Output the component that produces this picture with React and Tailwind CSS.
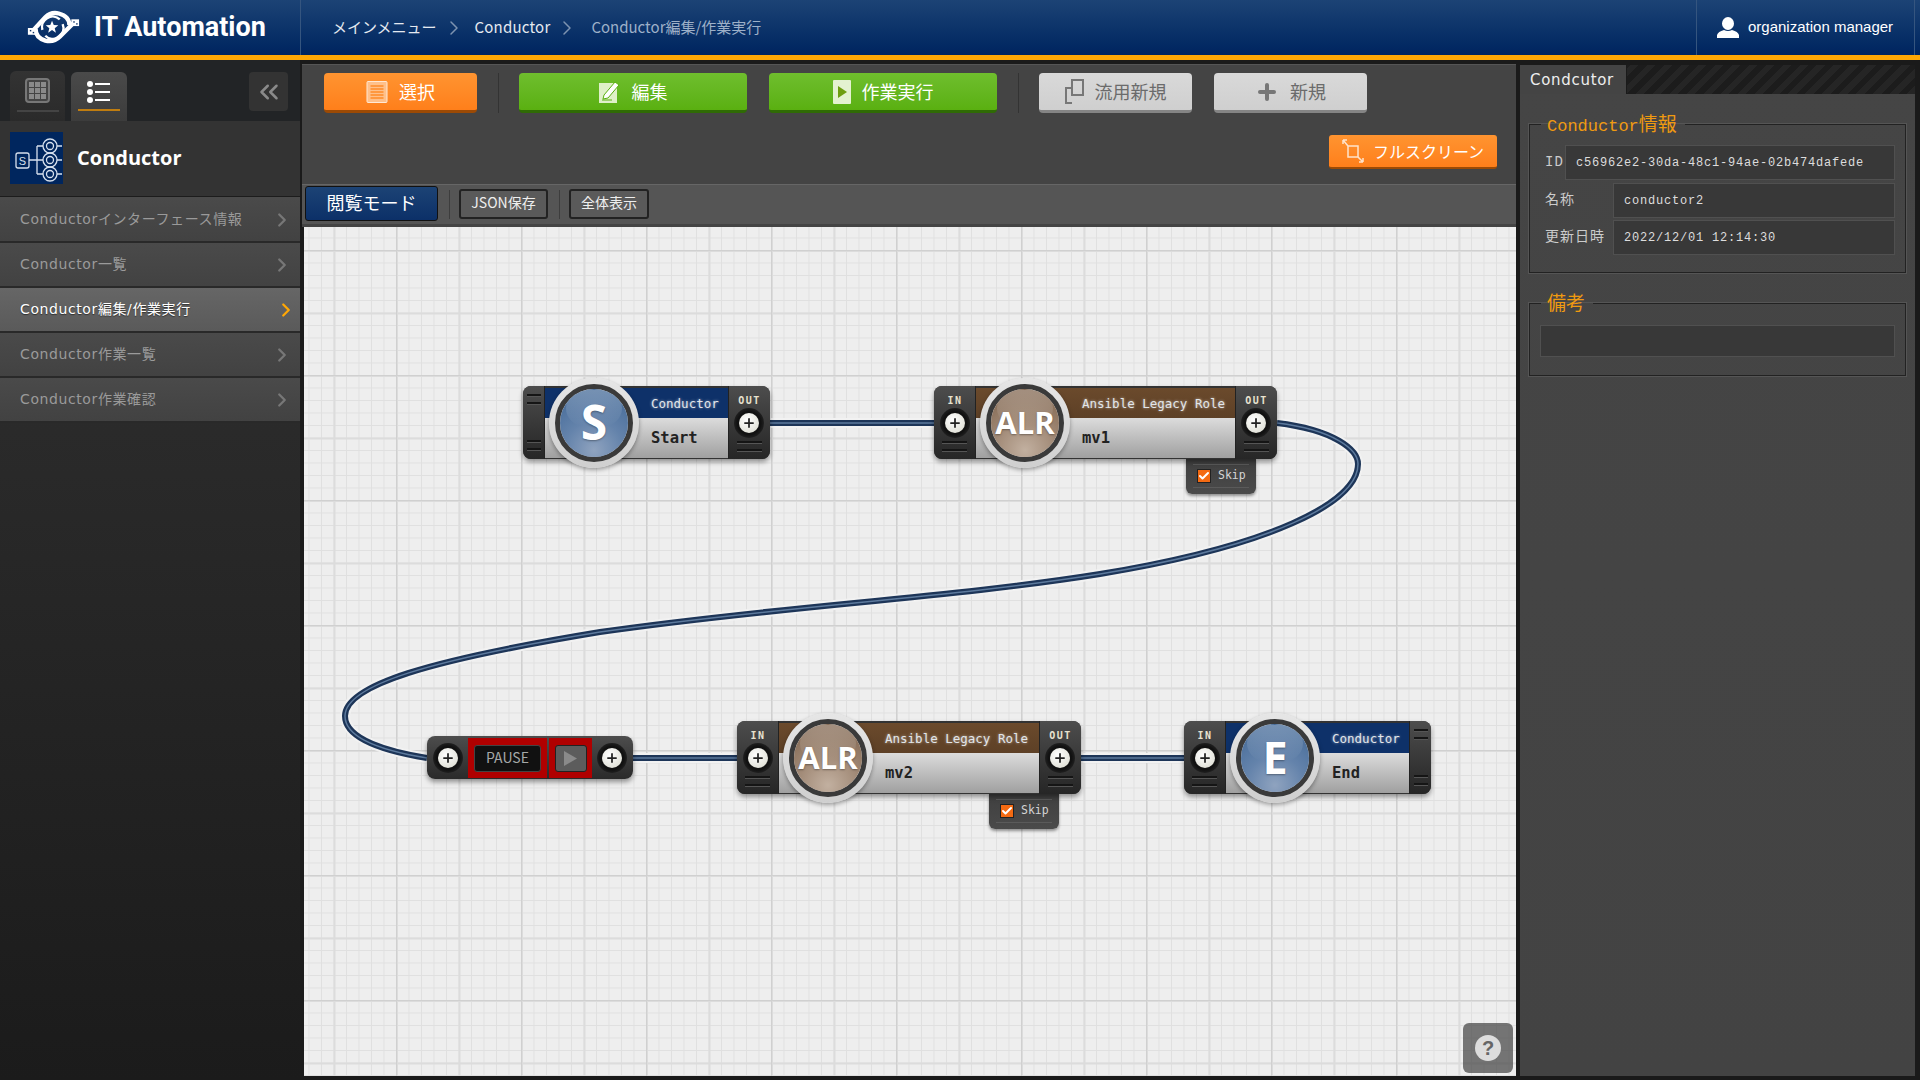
import { ChevronRight, ChevronsLeft, Plus, Check } from "lucide-react";

const jp = "font-['Noto_Sans_CJK_JP',sans-serif]";
const mono = "font-['Liberation_Mono','Noto_Sans_CJK_JP',monospace]";
const nodeMono = "font-['DejaVu_Sans_Mono',monospace]";

const menuItems = [
  { name: "Conductorインターフェース情報" },
  { name: "Conductor一覧" },
  { name: "Conductor編集/作業実行", active: true },
  { name: "Conductor作業一覧" },
  { name: "Conductor作業確認" },
];

function Logo() {
  return (
    <svg width="56" height="38" viewBox="26 7 58 38" className="shrink-0">
      <g fill="none" stroke="#fff" strokeWidth="4.5">
        <path d="M33 30 L47 15 Q53 9 61 11 Q72 14 72 23" />
        <path d="M77 20 L62 35 Q56 41 47 39 Q37 36 37 27" />
        <path d="M44 28 A11 11 0 0 1 62 17" strokeWidth="2.5" />
        <path d="M65 22 A11 11 0 0 1 47 34" strokeWidth="2.5" />
      </g>
      <polygon
        points="54,18.5 55.8,23 60.5,23.2 56.8,26.2 58,30.8 54,28.2 50,30.8 51.2,26.2 47.5,23.2 52.2,23"
        fill="#fff"
      />
      <rect x="29" y="26" width="8" height="7" fill="#fff" />
      <rect x="74" y="17" width="8" height="7" fill="#fff" />
      <rect x="31" y="28" width="1.5" height="1.5" fill="#12356a" />
      <rect x="34" y="30" width="1.5" height="1.5" fill="#12356a" />
      <rect x="76" y="19" width="1.5" height="1.5" fill="#12356a" />
      <rect x="79" y="21" width="1.5" height="1.5" fill="#12356a" />
    </svg>
  );
}

function ConductorIcon() {
  return (
    <svg width="53" height="52" viewBox="0 0 53 52" className="shrink-0 bg-[#00265e]">
      <g fill="none" stroke="#d7e1ee" strokeWidth="1.3">
        <rect x="6" y="21" width="13" height="15" rx="2" />
        <path d="M19 28 H27 M27 14 V42 M27 14 H33 M27 28 H33 M27 42 H33" />
        <circle cx="40" cy="14" r="7" />
        <circle cx="40" cy="28" r="7" />
        <circle cx="40" cy="42" r="7" />
        <circle cx="40" cy="14" r="3.5" />
        <circle cx="40" cy="28" r="3.5" />
        <circle cx="40" cy="42" r="3.5" />
        <path d="M47 14 H52 M47 28 H52 M47 42 H52" />
      </g>
      <text x="12.5" y="33" textAnchor="middle" fontSize="11" fill="#d7e1ee" fontFamily="Liberation Sans">S</text>
    </svg>
  );
}

function Header() {
  return (
    <header className="h-[60px] shrink-0 flex bg-gradient-to-b from-[#1c4375] to-[#00245f] border-b-[5px] border-[#ffa705]">
      <div className="w-[301px] flex items-center pl-[25px] gap-[13px] border-r border-[#35557f]">
        <Logo />
        <span className="font-['Roboto',sans-serif] font-bold text-[27px] text-white leading-none">IT Automation</span>
      </div>
      <nav className={`flex-1 flex items-center pl-[31px] text-[15px] text-[#e4e9f0] ${jp}`}>
        <span>メインメニュー</span>
        <ChevronRight size={24} strokeWidth={1.5} className="ml-[5px] text-[#7d93b0]" />
        <span className="ml-[9px] tracking-[0.2px]">Conductor</span>
        <ChevronRight size={24} strokeWidth={1.5} className="ml-[5px] text-[#7d93b0]" />
        <span className="ml-[12px] text-[#9db0c8]">Conductor編集/作業実行</span>
      </nav>
      <div className="w-[219px] mr-[5px] flex items-center pl-[20px] gap-[9px] border-x border-[#35557f]">
        <svg width="22" height="21" viewBox="0 0 22 21" fill="#fff">
          <ellipse cx="11" cy="6.5" rx="6" ry="6.5" />
          <path d="M0 21 V18 Q1 14.5 7 13 Q11 15 15 13 Q21 14.5 22 18 V21 Z" />
        </svg>
        <span className="font-['Liberation_Sans',sans-serif] text-[15px] text-white">organization manager</span>
      </div>
    </header>
  );
}

function Sidebar() {
  return (
    <aside className="w-[300px] shrink-0 flex flex-col bg-gradient-to-b from-[#333333] to-[#1b1b1b]">
      <div className="h-[61px] shrink-0 bg-[#222426] flex pl-[10px] pt-[11px]">
        <div className="w-[55px] h-[50px] rounded-t-[6px] bg-gradient-to-b from-[#333] to-[#2a2a2a] flex flex-col items-center pt-[7px]">
          <div className="w-[25px] h-[25px] rounded-[4px] border-2 border-[#777] grid grid-cols-3 gap-px p-[2px] bg-[#444]">
            {Array.from({ length: 9 }).map((_, i) => (
              <span key={i} className="bg-[#8a8a8a]" />
            ))}
          </div>
          <span className="w-[42px] h-[2px] bg-[#444] mt-[7px]" />
        </div>
        <div className="w-[56px] h-[49px] ml-[6px] mt-px rounded-t-[6px] bg-gradient-to-b from-[#4a4a4a] to-[#3c3c3c] flex flex-col items-center pt-[9px]">
          <svg width="24" height="22" viewBox="0 0 24 22" fill="#fff">
            <circle cx="3" cy="3" r="3" />
            <circle cx="3" cy="11" r="3" />
            <circle cx="3" cy="19" r="3" />
            <rect x="8" y="2" width="15" height="2" />
            <rect x="8" y="10" width="15" height="2" />
            <rect x="8" y="18" width="15" height="2" />
          </svg>
          <span className="w-[42px] h-[2px] bg-[#c07d10] mt-[6px]" />
        </div>
        <div className="ml-[122px] w-[39px] h-[39px] mt-px rounded-[4px] bg-[#333] flex items-center justify-center">
          <ChevronsLeft size={30} strokeWidth={2} className="text-[#8a8a8a]" />
        </div>
      </div>
      <div className="h-[76px] shrink-0 bg-[#333] border-b border-[#1c1c1c] flex items-center pl-[10px] gap-[14px] pb-[2px]">
        <ConductorIcon />
        <span className="font-['Open_Sans',sans-serif] font-bold text-[20px] text-white">Conductor</span>
      </div>
      <ul className="border-t border-[#4a4a4a] font-['DejaVu_Sans','Noto_Sans_CJK_JP',sans-serif] text-[14px] tracking-[0.6px]">
        {menuItems.map((item) => (
          <li
            key={item.name}
            className={`h-[45px] flex items-center justify-between pl-[20px] pr-[7px] border-b-2 border-[#292929] ${
              item.active
                ? "bg-gradient-to-b from-[#666] to-[#5a5a5a] text-white [text-shadow:0_1px_1px_rgba(0,0,0,0.5)]"
                : "bg-gradient-to-b from-[#4a4a4a] to-[#424242] text-[#9a9a9a]"
            }`}
          >
            <span className="pb-px">{item.name}</span>
            <ChevronRight size={22} strokeWidth={2.5} className={item.active ? "text-[#ffa705] -mr-[4px]" : "text-[#777]"} />
          </li>
        ))}
      </ul>
    </aside>
  );
}

function ToolButton({ color, width, icon, children }) {
  const colors = {
    orange: "from-[#ff9430] to-[#ff7f1a] border-[#9c4a05] text-white",
    green: "from-[#6fbe2d] to-[#5ab010] border-[#2f6b05] text-white",
    gray: "from-[#d9d9d9] to-[#cfcfcf] border-[#858585] text-[#6b6b6b]",
  };
  return (
    <button className={`${width} h-[40px] rounded-[4px] border-b-[3px] bg-gradient-to-b ${colors[color]} flex items-center justify-center gap-[11px] text-[18px] ${jp}`}>
      {icon}
      <span>{children}</span>
    </button>
  );
}

const SelectIcon = (
  <svg width="22" height="22" viewBox="0 0 21 22">
    <rect x="0.5" y="0.5" width="20" height="21" rx="1" fill="#ffc08a" stroke="#ffe8d4" />
    <path d="M4 5H17M4 8H17M4 11H17M4 14H17M4 17H17" stroke="#ff8a28" strokeWidth="1.3" />
  </svg>
);
const EditIcon = (
  <svg width="22" height="24" viewBox="0 0 22 24">
    <rect x="0" y="3" width="18" height="20" fill="#dff0c8" />
    <path d="M5 15 L16 2 L20 5 L9 18 L4 19 Z" fill="#fff" stroke="#5ab010" strokeWidth="1" />
    <path d="M3 20H13" stroke="#5ab010" strokeWidth="1" />
  </svg>
);
const RunIcon = (
  <svg width="18" height="24" viewBox="0 0 18 24">
    <rect width="18" height="24" rx="1" fill="#e4f2d0" />
    <path d="M5 6 L14 12 L5 18 Z" fill="#6e9e10" />
  </svg>
);
const CopyIcon = (
  <svg width="19" height="25" viewBox="0 0 19 25" fill="none" stroke="#777" strokeWidth="2">
    <rect x="7" y="1" width="11" height="15" />
    <path d="M7 9H1V24H7" />
  </svg>
);
const AddIcon = <Plus size={24} strokeWidth={4} className="text-[#777]" absoluteStrokeWidth />;
const FullIcon = (
  <svg width="22" height="24" viewBox="0 0 22 24" fill="none" stroke="#ffe3cb" strokeWidth="1.5">
    <rect x="6" y="7" width="10" height="11" />
    <path d="M1 1 L6 7 M1 1 H5 M1 1 V5 M21 23 L16 18 M21 23 H17 M21 23 V19" />
  </svg>
);

function Toolbar() {
  return (
    <div className="h-[120px] shrink-0 bg-[#444] border-t border-[#555]">
      <div className="flex pl-[22px] pt-[8px]">
        <ToolButton color="orange" width="w-[153px]" icon={SelectIcon}>選択</ToolButton>
        <span className="w-px h-[40px] bg-[#333] ml-[21px] mr-[20px]" />
        <ToolButton color="green" width="w-[228px]" icon={EditIcon}>編集</ToolButton>
        <ToolButton color="green" width="w-[228px] ml-[22px]" icon={RunIcon}>作業実行</ToolButton>
        <span className="w-px h-[40px] bg-[#333] ml-[21px] mr-[20px]" />
        <ToolButton color="gray" width="w-[153px]" icon={CopyIcon}>流用新規</ToolButton>
        <ToolButton color="gray" width="w-[153px] ml-[22px]" icon={AddIcon}>新規</ToolButton>
      </div>
      <div className="flex justify-end pr-[19px] mt-[22px]">
        <button className={`w-[168px] h-[34px] rounded-[3px] border-b-[2px] border-[#9c4a05] bg-gradient-to-b from-[#ff9430] to-[#ff7f1a] flex items-center justify-center gap-[9px] text-[16px] text-white ${jp}`}>
          {FullIcon}
          <span>フルスクリーン</span>
        </button>
      </div>
    </div>
  );
}

function SubToolbar() {
  return (
    <div className={`h-[43px] shrink-0 bg-[#555] border-t border-[#666] border-b-[3px] border-b-[#444] flex items-start pl-[3px] pt-px ${jp}`}>
      <button className="w-[133px] h-[35px] pb-[2px] rounded-[3px] border border-[#111] bg-gradient-to-b from-[#1c4375] to-[#0c3068] text-white text-[18px]">閲覧モード</button>
      <span className="w-px h-[29px] bg-[#3d3d3d] ml-[11px] mt-[4px]" />
      <button className="w-[89px] h-[30px] pb-[3px] ml-[9px] mt-[3px] rounded-[3px] border-2 border-[#222] bg-[#5a5a5a] text-[#eee] text-[14px]">JSON保存</button>
      <span className="w-px h-[29px] bg-[#3d3d3d] ml-[11px] mt-[4px]" />
      <button className="w-[80px] h-[30px] pb-[3px] ml-[9px] mt-[3px] rounded-[3px] border-2 border-[#222] bg-[#5a5a5a] text-[#eee] text-[14px]">全体表示</button>
    </div>
  );
}

function Grip({ className = "" }) {
  return (
    <div className={`flex flex-col gap-[5px] ${className}`}>
      <span className="h-[2px] bg-[#151515] border-b border-[#555] box-content" />
      <span className="h-[2px] bg-[#151515] border-b border-[#555] box-content" />
    </div>
  );
}

function Screw() {
  return (
    <div className="w-[30px] h-[30px] rounded-full bg-[radial-gradient(circle,#111_55%,#3a3a3a_100%)] flex items-center justify-center">
      <div className="w-[20px] h-[20px] rounded-full bg-[radial-gradient(circle_at_40%_35%,#ffffff,#d8d8cc)] flex items-center justify-center">
        <Plus size={14} strokeWidth={3} className="text-[#222]" />
      </div>
    </div>
  );
}

function Terminal({ label }) {
  return (
    <div className={`w-[41px] shrink-0 flex flex-col items-center pt-[9px] bg-gradient-to-b from-[#4d4d4d] to-[#262626] ${label === "OUT" ? "pr-[1px]" : ""}`}>
      <span className={`${nodeMono} font-bold text-[10px] leading-[12px] tracking-[1.5px] text-[#e8e2cf] ml-[1px]`}>{label}</span>
      <div className="mt-[1px]"><Screw /></div>
      <Grip className="w-[25px] mt-[3px]" />
    </div>
  );
}

function EndBar() {
  return (
    <div className="w-[21px] shrink-0 flex flex-col justify-between items-center py-[8px] bg-gradient-to-b from-[#4d4d4d] to-[#262626]">
      <Grip className="w-[14px]" />
      <Grip className="w-[14px]" />
    </div>
  );
}

function Badge({ letter, tone, size }) {
  const tones = {
    blue: "bg-[radial-gradient(circle_at_50%_90%,#8fa3bf_0%,#6483ab_42%,#3e6594_100%)]",
    brown: "bg-[radial-gradient(circle_at_50%_90%,#c2b0a0_0%,#a28b78_42%,#7b5f48_100%)]",
  };
  return (
    <div className="absolute -top-[8px] left-[5px] w-[90px] h-[90px] rounded-full bg-gradient-to-b from-[#e6e6e6] to-[#cfcfcf] p-[6px] shadow-[0_2px_4px_rgba(0,0,0,0.35)]">
      <div className="w-full h-full rounded-full border-[5px] border-[#3a3a3a] overflow-hidden relative">
        <div className={`absolute inset-0 ${tones[tone]}`} />
        <div className="absolute left-[6px] right-[6px] top-[1px] h-[36px] rounded-full bg-gradient-to-b from-white/25 to-white/0" />
        <span className={`absolute inset-0 flex items-center justify-center pb-[2px] font-['Open_Sans',sans-serif] font-bold text-white ${size} [text-shadow:0_1px_2px_rgba(0,0,0,0.35)]`}>
          {letter}
        </span>
      </div>
    </div>
  );
}

function Node({ position, width, left, right, letter, tone, letterSize, title, name, skip }) {
  const heads = {
    blue: "bg-[#0e3169]",
    brown: "bg-gradient-to-b from-[#6b4a2c] to-[#5d4026]",
  };
  return (
    <div className={`absolute ${position} ${width} h-[73px]`}>
      {skip && (
        <div className="absolute left-[252px] top-[72px] w-[70px] h-[36px] rounded-b-[6px] bg-gradient-to-b from-[#3f3f3f] to-[#4a4a4a] shadow-[0_2px_3px_rgba(0,0,0,0.4)] px-[7px] flex flex-col justify-center">
          <div className="border-y border-[#5a5a5a] h-[24px] flex items-center pl-[4px] gap-[7px]">
            <span className="w-[14px] h-[14px] bg-[#f46a12] border border-[#222] flex items-center justify-center">
              <Check size={12} strokeWidth={4} className="text-white" />
            </span>
            <span className={`${nodeMono} text-[11.5px] text-[#d4d4d4]`}>Skip</span>
          </div>
        </div>
      )}
      <div className="absolute inset-0 rounded-[8px] overflow-hidden flex bg-[#333] shadow-[0_3px_5px_rgba(0,0,0,0.4)]">
        {left}
        <div className="flex-1 flex flex-col pt-[2px] pb-px border-x border-[#222]">
          <div className={`h-[30px] ${heads[tone]} pl-[106px] pt-[3px] flex items-center`}>
            <span className={`${nodeMono} text-[12.5px] text-[#e2e6ea] [text-shadow:0_0_3px_rgba(255,255,255,0.6)]`}>{title}</span>
          </div>
          <div className="flex-1 bg-gradient-to-b from-[#dcdcdc] to-[#a0a0a0] pl-[106px] pt-px flex items-center">
            <span className={`${nodeMono} font-bold text-[15.5px] text-[#222]`}>{name}</span>
          </div>
        </div>
        {right}
      </div>
      <div className={`absolute top-0 ${left.type === EndBar ? "left-[21px]" : "left-[41px]"}`}>
        <Badge letter={letter} tone={tone} size={letterSize} />
      </div>
    </div>
  );
}

function PauseNode() {
  return (
    <div className="absolute left-[123px] top-[509px] w-[206px] h-[43px] rounded-[8px] overflow-hidden flex bg-gradient-to-b from-[#4d4d4d] to-[#2a2a2a] shadow-[0_3px_5px_rgba(0,0,0,0.4)]">
      <div className="w-[41px] flex items-center justify-center"><Screw /></div>
      <div className="w-[79px] mt-[2px] mb-px bg-[#b00000] flex items-center justify-center">
        <div className={`w-[67px] h-[27px] pb-[2px] rounded-[3px] bg-[#111] border border-[#444] flex items-center justify-center ${jp} text-[14px] text-[#a5a8a8]`}>PAUSE</div>
      </div>
      <div className="w-[2px]" />
      <div className="w-[43px] mt-[2px] mb-px bg-[#b00000] flex items-center justify-center">
        <div className="w-[32px] h-[27px] rounded-[3px] bg-[#5c5c5c] border border-[#222] flex items-center justify-center">
          <svg width="13" height="15" viewBox="0 0 13 15"><path d="M0 0 L13 7.5 L0 15 Z" fill="#8a8a8a" /></svg>
        </div>
      </div>
      <div className="flex-1 flex items-center justify-center pr-[2px]"><Screw /></div>
    </div>
  );
}

function Lines() {
  const paths = [
    "M770 423 H934",
    "M633 758 H737",
    "M1081 758 H1184",
    "M1277 423 C1335 430 1358 450 1358 464 C1358 503 1270 546 1100 574 C950 598 780 606 600 632 C430 660 345 685 345 716 C345 740 390 752 427 758",
  ];
  return (
    <svg className="absolute inset-0" width="1212" height="849" viewBox="304 227 1212 849" fill="none">
      {paths.map((d) => (
        <g key={d}>
          <path d={d} stroke="#f2f2f2" strokeWidth="10" />
          <path d={d} stroke="#1d3558" strokeWidth="6" />
          <path d={d} stroke="#5d7a9d" strokeWidth="1.5" />
        </g>
      ))}
    </svg>
  );
}

function Canvas() {
  return (
    <div className="relative flex-1 ml-[2px] mb-[4px] overflow-hidden bg-[#eeeeee] bg-[linear-gradient(to_right,#d0d0d0_1px,transparent_1px),linear-gradient(to_bottom,#d0d0d0_1px,transparent_1px),linear-gradient(to_right,#dcdcdc_2px,transparent_2px),linear-gradient(to_bottom,#dcdcdc_2px,transparent_2px),linear-gradient(to_right,#e0e0e0_1px,transparent_1px),linear-gradient(to_bottom,#e0e0e0_1px,transparent_1px)] bg-[size:125px_125px,125px_125px,62.5px_62.5px,62.5px_62.5px,12.5px_12.5px,12.5px_12.5px] bg-[position:92px_23px]">
      <Lines />
      <Node position="left-[219px] top-[159px]" width="w-[247px]" left={<EndBar />} right={<Terminal label="OUT" />} letter="S" tone="blue" letterSize="text-[48px]" title="Conductor" name="Start" />
      <Node position="left-[630px] top-[159px]" width="w-[343px]" left={<Terminal label="IN" />} right={<Terminal label="OUT" />} letter="ALR" tone="brown" letterSize="text-[31px]" title="Ansible Legacy Role" name="mv1" skip />
      <PauseNode />
      <Node position="left-[433px] top-[494px]" width="w-[344px]" left={<Terminal label="IN" />} right={<Terminal label="OUT" />} letter="ALR" tone="brown" letterSize="text-[31px]" title="Ansible Legacy Role" name="mv2" skip />
      <Node position="left-[880px] top-[494px]" width="w-[247px]" left={<Terminal label="IN" />} right={<EndBar />} letter="E" tone="blue" letterSize="text-[45px]" title="Conductor" name="End" />
      <div className="absolute right-[3px] bottom-[3px] w-[50px] h-[50px] rounded-[6px] bg-[#404040]/70 flex items-center justify-center">
        <span className="w-[26px] h-[26px] rounded-full bg-[#ddd] flex items-center justify-center font-['Liberation_Sans',sans-serif] font-bold text-[20px] text-[#666]">?</span>
      </div>
    </div>
  );
}

function Field({ label, value, labelWidth, className = "" }) {
  return (
    <div className={`flex items-center ${className}`}>
      <span className={`${labelWidth} shrink-0 text-[14px] tracking-[1px] text-[#ccc] ${mono}`}>{label}</span>
      <div className={`flex-1 h-[35px] bg-[#383838] border border-[#505050] flex items-center pl-[10px] text-[12px] tracking-[0.8px] text-[#ddd] ${mono}`}>{value}</div>
    </div>
  );
}

function Group({ title, children, className }) {
  return (
    <fieldset className={`border border-[#222] shadow-[0_0_0_1px_#555] mx-[9px] px-[10px] ${className}`}>
      <legend className={`ml-[1px] pl-[6px] pr-[8px] pt-[4px] text-[17px] leading-[22px] text-[#f09a10] ${mono}`}>{title}</legend>
      {children}
    </fieldset>
  );
}

function RightPanel() {
  return (
    <aside className="w-[404px] shrink-0 pt-[5px] pb-[4px] pl-[3px] pr-[4px]">
      <div className="h-full flex flex-col bg-gradient-to-b from-[#454545] to-[#434343] border-x border-[#1a1a1a]">
        <div className="h-[29px] shrink-0 flex bg-[repeating-linear-gradient(135deg,#1c1c1c,#1c1c1c_6px,#252525_6px,#252525_12px)]">
          <div className="w-[107px] bg-[#444] border-r border-[#1a1a1a] pl-[10px] pt-[2px] flex items-center font-['DejaVu_Sans',sans-serif] text-[15px] tracking-[0.7px] text-[#eee]">Condcutor</div>
        </div>
        <Group title={<>Conductor<span className="text-[19px]">情報</span></>} className="mt-[17px] h-[162px]">
          <div className="flex flex-col gap-[2px] mt-[7px]">
            <Field label="ID" value="c56962e2-30da-48c1-94ae-02b474dafede" labelWidth="w-[25px] pl-[5px]" className="mb-px" />
            <Field label="名称" value="conductor2" labelWidth="w-[73px] pl-[5px]" />
            <Field label="更新日時" value="2022/12/01 12:14:30" labelWidth="w-[73px] pl-[5px]" />
          </div>
        </Group>
        <Group title={<span className="text-[19px]">備考</span>} className="mt-[17px] h-[86px]">
          <div className="h-[32px] mt-[8px] bg-[#383838] border border-[#505050]" />
        </Group>
      </div>
    </aside>
  );
}

export default function App() {
  return (
    <div className="w-[1920px] h-[1080px] flex flex-col overflow-hidden bg-[#1a1a1a]">
      <Header />
      <div className="flex-1 flex min-h-0">
        <Sidebar />
        <main className="flex-1 flex flex-col ml-[2px] mt-[4px] min-w-0">
          <Toolbar />
          <SubToolbar />
          <Canvas />
        </main>
        <RightPanel />
      </div>
    </div>
  );
}
